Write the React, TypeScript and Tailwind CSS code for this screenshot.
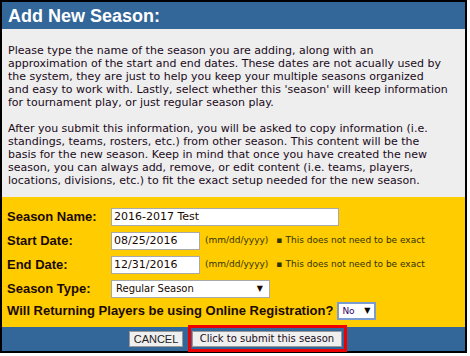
import React from 'react';

const verdana = { fontFamily: '"DejaVu Sans", Verdana, sans-serif' };

function Hint() {
  return (
    <span className="ml-[5px] text-[9px] text-[#333300] font-['DejaVu_Sans',sans-serif] whitespace-nowrap">
      (mm/dd/yyyy)
      <span className="ml-[8px] mr-[3px]">▪</span>
      This does not need to be exact
    </span>
  );
}

export default function App() {
  return (
    <div className="w-[467px] h-[353px] border-2 border-black bg-[#eeeeee] flex flex-col">
      <div className="h-[27px] bg-[#336699] px-[6px] flex items-center">
        <h1 className="text-white text-[18px] font-bold font-['Liberation_Sans',Arial,sans-serif] leading-none">
          Add New Season:
        </h1>
      </div>

      <div className="px-[6px] pt-[15px] pb-[10px] text-[11px] leading-[13px] text-[#1a0a1a] whitespace-nowrap" style={verdana}>
        <p>
          Please type the name of the season you are adding, along with an<br />
          approximation of the start and end dates. These dates are not acually used by<br />
          the system, they are just to help you keep your multiple seasons organized<br />
          and easy to work with. Lastly, select whether this 'season' will keep information<br />
          for tournament play, or just regular season play.
        </p>
        <p className="mt-[13px]">
          After you submit this information, you will be asked to copy information (i.e.<br />
          standings, teams, rosters, etc.) from other season. This content will be the<br />
          basis for the new season. Keep in mind that once you have created the new<br />
          season, you can always add, remove, or edit content (i.e. teams, players,<br />
          locations, divisions, etc.) to fit the exact setup needed for the new season.
        </p>
      </div>

      <div className="bg-[#ffcc00] px-[5px] pt-[11px] flex-1 flex flex-col gap-[6px] font-['Liberation_Sans',Arial,sans-serif] text-[#1a0a00]">
        <div className="flex items-center h-[18px]">
          <label className="w-[104px] text-[13px] font-bold">Season Name:</label>
          <div className="w-[228px] h-[18px] bg-white border border-[#a9a9a9] px-[2px] text-[11px] leading-[16px]" style={verdana}>
            2016-2017 Test
          </div>
        </div>
        <div className="flex items-center h-[18px]">
          <label className="w-[104px] text-[13px] font-bold">Start Date:</label>
          <div className="w-[89px] h-[18px] bg-white border border-[#a9a9a9] px-[2px] text-[11px] leading-[16px]" style={verdana}>
            08/25/2016
          </div>
          <Hint />
        </div>
        <div className="flex items-center h-[18px]">
          <label className="w-[104px] text-[13px] font-bold">End Date:</label>
          <div className="w-[89px] h-[18px] bg-white border border-[#a9a9a9] px-[2px] text-[11px] leading-[16px]" style={verdana}>
            12/31/2016
          </div>
          <Hint />
        </div>
        <div className="flex items-center h-[18px]">
          <label className="w-[104px] text-[13px] font-bold">Season Type:</label>
          <div className="w-[159px] h-[18px] bg-white border border-[#a9a9a9] pl-[4px] pr-[6px] text-[10px] leading-[16px] flex justify-between" style={verdana}>
            <span>Regular Season</span>
            <span className="text-[8px]">▼</span>
          </div>
        </div>
        <div className="flex items-center h-[18px] mt-[-2px]">
          <label className="text-[13px] font-bold whitespace-nowrap">
            Will Returning Players be using Online Registration?
          </label>
          <div className="ml-[4px] w-[39px] h-[18px] bg-white border-2 border-[#7a9cd3] pl-[3px] pr-[4px] text-[9px] leading-[14px] flex justify-between text-[#330066]" style={verdana}>
            <span>No</span>
            <span className="text-[8px] text-black">▼</span>
          </div>
        </div>
      </div>

      <div className="h-[24px] bg-[#336699] flex items-start justify-center pl-[9px]">
        <button className="mt-[4px] h-[16px] w-[54px] bg-[#efefef] border border-[#999] text-[11px] leading-[14px] text-[#222] font-['Liberation_Sans',Arial,sans-serif]">
          CANCEL
        </button>
        <span className="ml-[5px] mt-[-2px] h-[27px] border-[3px] border-[#ee0000] pt-[3px] pl-px pr-[2px] flex items-start">
          <button className="h-[16px] w-[150px] bg-[#efefef] border border-[#999] text-[10px] leading-[14px] text-[#1a0a1a] whitespace-nowrap" style={verdana}>
            Click to submit this season
          </button>
        </span>
      </div>
    </div>
  );
}
